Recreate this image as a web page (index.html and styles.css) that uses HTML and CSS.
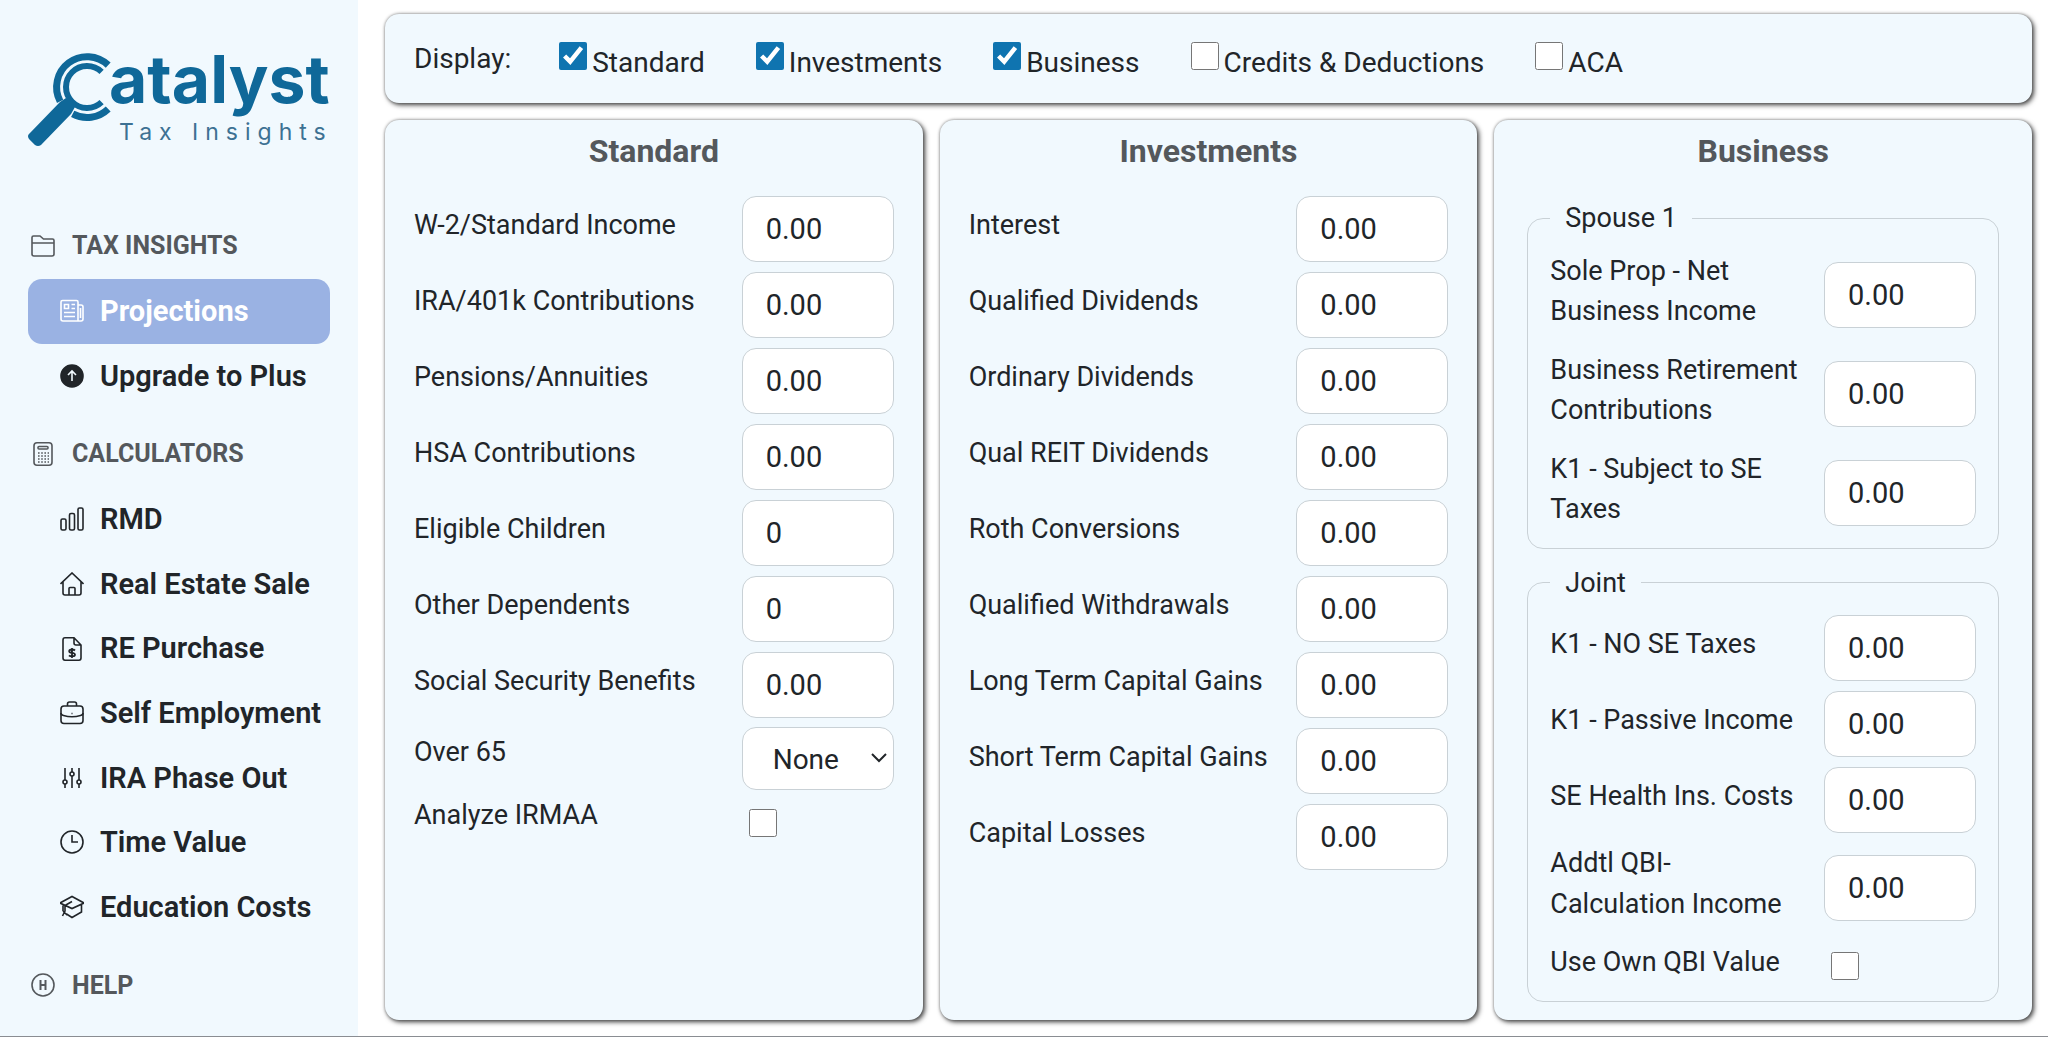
FILE: index.html
```html
<!DOCTYPE html>
<html lang="en">
<head>
  <meta charset="UTF-8">
  <meta name="viewport" content="width=device-width, initial-scale=1.0">
  <title>Catalyst Tax Insights - Projections</title>
  <link rel="stylesheet" href="styles.css">
</head>
<body>
  <aside class="sidebar">
    <a class="logo" href="#" aria-label="Catalyst Tax Insights">
      <svg viewBox="0 0 302 98" width="302" height="98">
        <g fill="none" stroke="#0f6899">
          <path stroke-width="7" d="M80.2 13.1A30.5 30.5 0 0 0 32.1 49.3"/>
          <path stroke-width="7" d="M44.7 61.9A30.5 30.5 0 0 0 80.2 56.9"/>
          <path stroke-width="6" d="M73.6 19.9A21 21 0 1 0 73.6 50.1"/>
        </g>
        <path fill="#0f6899" d="M38 46L47 55L43 62L13 93Q10 95 7 93L1 87Q-1 84 1 82L32 50Z"/>
        <text class="logo-name" x="81" y="51">atalyst</text>
        <text class="logo-tag" x="91" y="88">Tax Insights</text>
      </svg>
    </a>

    <nav class="menu">
      <h3 class="menu-title">
        <svg class="icon" viewBox="0 0 24 24"><path d="M1 5V3.500Q1 2 2.500 2H9L12.500 5H21.500Q23 5 23 6.500V20Q23 22 21 22H3Q1 22 1 20ZM1 9H23"/></svg>
        TAX INSIGHTS
      </h3>
      <a class="menu-item active" href="#">
        <svg class="icon" viewBox="0 0 24 24"><path d="M18 6H21Q23 6 23 8V20Q23 22 21 22H3Q1 22 1 20V3Q1 1.500 2.500 1.500H16.500Q18 1.500 18 3V22M20.500 9V19M4.500 5.500H8.500V9.500H4.500ZM11.500 5.500H15M11.500 9.500H15M4 13.500H15M4 17.500H15"/></svg>
        Projections
      </a>
      <a class="menu-item" href="#">
        <svg class="icon" viewBox="0 0 24 24"><circle cx="12" cy="12" r="11" fill="currentColor"/><path stroke="#f1f9fe" d="M12 17V7.500M8 11L12 7L16 11"/></svg>
        Upgrade to Plus
      </a>

      <h3 class="menu-title">
        <svg class="icon" viewBox="0 0 24 24"><rect x="3" y="0.800" width="18" height="22.400" rx="3"/><rect x="7" y="4.500" width="10" height="2.500" rx="1"/><path stroke-dasharray="1.600 1.600" d="M7 11H18M7 14H18M7 17H18M7 20H18"/></svg>
        CALCULATORS
      </h3>
      <a class="menu-item" href="#">
        <svg class="icon" viewBox="0 0 24 24"><rect x="1" y="12" width="5" height="11" rx="1.500"/><rect x="9.500" y="6.500" width="5" height="16.500" rx="1.500"/><rect x="18" y="1" width="5" height="22" rx="1.500"/></svg>
        RMD
      </a>
      <a class="menu-item" href="#">
        <svg class="icon" viewBox="0 0 24 24"><path d="M0.500 12L12 1L23.500 12M3 10V21Q3 23 5 23H19Q21 23 21 21V10M9 23V16.500Q9 15.500 10 15.500H14Q15 15.500 15 16.500V23"/></svg>
        Real Estate Sale
      </a>
      <a class="menu-item" href="#">
        <svg class="icon" viewBox="0 0 24 24"><path d="M14 0.800H5Q3 0.800 3 3V21Q3 23.200 5 23.200H19Q21 23.200 21 21V8ZM14 0.800V6Q14 8 16 8H21"/><path stroke-width="1.800" d="M15 13.500Q14 12.500 12 12.500Q9.200 12.500 9.200 14.200Q9.200 15.600 12 15.900Q15 16.200 15 17.800Q15 19.400 12 19.400Q10 19.400 9 18.300M12 11V21"/></svg>
        RE Purchase
      </a>
      <a class="menu-item" href="#">
        <svg class="icon" viewBox="0 0 24 24"><rect x="1" y="5" width="22" height="17.500" rx="3"/><path d="M7.500 5V3Q7.500 1 9.500 1H14.500Q16.500 1 16.500 3V5M1 12Q1 14 3.500 14.500Q12 17 20.500 14.500Q23 14 23 12M11.500 12.500H12.500"/></svg>
        Self Employment
      </a>
      <a class="menu-item" href="#">
        <svg class="icon" viewBox="0 0 24 24"><path d="M5 2V14M5 18V22M12 2V6M12 10V22M19 2V14M19 18V22"/><circle cx="5" cy="16" r="2"/><circle cx="12" cy="8" r="2"/><circle cx="19" cy="16" r="2"/></svg>
        IRA Phase Out
      </a>
      <a class="menu-item" href="#">
        <svg class="icon" viewBox="0 0 24 24"><circle cx="12" cy="12" r="11"/><path d="M12 5V12H18"/></svg>
        Time Value
      </a>
      <a class="menu-item" href="#">
        <svg class="icon" viewBox="0 0 24 24"><path d="M0 8L12 1.500L24 8L12 13.500ZM21.500 9.500V17L12 22.500L6.500 19M12 6.500L5 10.500V16.500M3 9.500V16M3 16L7 20M5 16L2.500 21"/></svg>
        Education Costs
      </a>

      <h3 class="menu-title">
        <svg class="icon" viewBox="0 0 24 24"><circle cx="12" cy="12" r="11"/><path stroke-width="2" d="M9.500 7V17M14.500 7V17M9.500 12H14.500"/></svg>
        HELP
      </h3>
    </nav>
  </aside>

  <main class="content">
    <section class="panel display-bar">
      <span class="display-title">Display:</span>
      <label class="toggle"><input type="checkbox" checked><span>Standard</span></label>
      <label class="toggle"><input type="checkbox" checked><span>Investments</span></label>
      <label class="toggle"><input type="checkbox" checked><span>Business</span></label>
      <label class="toggle"><input type="checkbox"><span>Credits &amp; Deductions</span></label>
      <label class="toggle"><input type="checkbox"><span>ACA</span></label>
    </section>

    <div class="columns">
      <section class="panel column">
        <h2>Standard</h2>
        <div class="row"><label for="w2">W-2/Standard Income</label><input id="w2" type="text" value="0.00"></div>
        <div class="row"><label for="ira">IRA/401k Contributions</label><input id="ira" type="text" value="0.00"></div>
        <div class="row"><label for="pensions">Pensions/Annuities</label><input id="pensions" type="text" value="0.00"></div>
        <div class="row"><label for="hsa">HSA Contributions</label><input id="hsa" type="text" value="0.00"></div>
        <div class="row"><label for="children">Eligible Children</label><input id="children" type="text" value="0"></div>
        <div class="row"><label for="dependents">Other Dependents</label><input id="dependents" type="text" value="0"></div>
        <div class="row"><label for="ssb">Social Security Benefits</label><input id="ssb" type="text" value="0.00"></div>
        <div class="row row-select">
          <label for="over65">Over 65</label>
          <div class="select-box">
            <select id="over65">
              <option>None</option>
              <option>One</option>
              <option>Both</option>
            </select>
            <svg class="chevron" viewBox="0 0 16 10"><path d="M1 1L8 8L15 1"/></svg>
          </div>
        </div>
        <div class="row row-check"><label for="irmaa">Analyze IRMAA</label><div class="check-box"><input id="irmaa" type="checkbox"></div></div>
      </section>

      <section class="panel column">
        <h2>Investments</h2>
        <div class="row"><label for="interest">Interest</label><input id="interest" type="text" value="0.00"></div>
        <div class="row"><label for="qualdiv">Qualified Dividends</label><input id="qualdiv" type="text" value="0.00"></div>
        <div class="row"><label for="orddiv">Ordinary Dividends</label><input id="orddiv" type="text" value="0.00"></div>
        <div class="row"><label for="reit">Qual REIT Dividends</label><input id="reit" type="text" value="0.00"></div>
        <div class="row"><label for="roth">Roth Conversions</label><input id="roth" type="text" value="0.00"></div>
        <div class="row"><label for="withdrawals">Qualified Withdrawals</label><input id="withdrawals" type="text" value="0.00"></div>
        <div class="row"><label for="ltcg">Long Term Capital Gains</label><input id="ltcg" type="text" value="0.00"></div>
        <div class="row"><label for="stcg">Short Term Capital Gains</label><input id="stcg" type="text" value="0.00"></div>
        <div class="row"><label for="losses">Capital Losses</label><input id="losses" type="text" value="0.00"></div>
      </section>

      <section class="panel column">
        <h2>Business</h2>
        <div class="groups">
          <fieldset>
            <legend>Spouse 1</legend>
            <div class="row"><label for="soleprop">Sole Prop - Net Business Income</label><input id="soleprop" type="text" value="0.00"></div>
            <div class="row"><label for="retirement">Business Retirement Contributions</label><input id="retirement" type="text" value="0.00"></div>
            <div class="row"><label for="k1se">K1 - Subject to SE Taxes</label><input id="k1se" type="text" value="0.00"></div>
          </fieldset>
          <fieldset>
            <legend>Joint</legend>
            <div class="row"><label for="k1nose">K1 - NO SE Taxes</label><input id="k1nose" type="text" value="0.00"></div>
            <div class="row"><label for="k1passive">K1 - Passive Income</label><input id="k1passive" type="text" value="0.00"></div>
            <div class="row"><label for="sehealth">SE Health Ins. Costs</label><input id="sehealth" type="text" value="0.00"></div>
            <div class="row"><label for="qbi">Addtl QBI-Calculation Income</label><input id="qbi" type="text" value="0.00"></div>
            <div class="row row-check"><label for="ownqbi">Use Own QBI Value</label><div class="check-box"><input id="ownqbi" type="checkbox"></div></div>
          </fieldset>
        </div>
      </section>
    </div>
  </main>
</body>
</html>
```
FILE: styles.css
```css
:root {
  --panel-bg: #f1f9fe;
  --text: #212529;
  --muted: #54585c;
  --border: #c9d1d6;
  --accent: #0f74b0;
}

* {
  box-sizing: border-box;
}

body {
  margin: 0;
  display: flex;
  min-height: 100vh;
  background: #fff;
  border-bottom: 1px solid #8a8d92;
  color: var(--text);
  font-family: Roboto, "Noto Sans", sans-serif;
  font-size: 27px;
  line-height: 1.5;
}

/* Sidebar */
.sidebar {
  flex: 0 0 357px;
  padding: 52px 28px 0;
  background: var(--panel-bg);
}

.logo {
  display: block;
  height: 98px;
}

.logo svg {
  display: block;
  overflow: visible;
}

.logo-name {
  font-family: Inter, sans-serif;
  font-size: 66px;
  font-weight: 700;
  fill: #0f6899;
}

.logo-tag {
  font-family: Inter, sans-serif;
  font-size: 23px;
  font-weight: 400;
  letter-spacing: 7px;
  fill: #3d7193;
}

.menu {
  margin-top: 63px;
}

.menu-title {
  display: flex;
  align-items: center;
  gap: 17px;
  margin: 0;
  padding: 0 3px;
  height: 66px;
  color: var(--muted);
  font-size: 25px;
  font-weight: 700;
}

.menu-item + .menu-title {
  margin-top: 13px;
}

.menu-item {
  display: flex;
  align-items: center;
  gap: 16px;
  padding: 12px 0 12px 32px;
  border-radius: 14px;
  color: var(--text);
  font-size: 29px;
  font-weight: 600;
  line-height: 1.4;
  text-decoration: none;
  white-space: nowrap;
}

.menu-item.active {
  background: #9ab2e3;
  color: #fff;
  font-weight: 700;
}

.icon {
  flex: none;
  width: 24px;
  height: 24px;
  fill: none;
  stroke: currentColor;
  stroke-width: 1.6;
}

/* Main area */
.content {
  flex: 1;
  display: flex;
  flex-direction: column;
  gap: 17px;
  padding: 14px 16px 16px 27px;
}

.panel {
  background: var(--panel-bg);
  border-radius: 14px;
  box-shadow: 2px 2px 5px #444, 0 0 3px #999;
}

.display-bar {
  display: flex;
  align-items: center;
  gap: 51px;
  padding: 24px 29px;
  font-size: 28px;
  line-height: 41px;
}

.display-title {
  margin-right: -3px;
}

.toggle {
  display: flex;
  gap: 5px;
}

.toggle span {
  padding-top: 4px;
  margin-bottom: -4px;
}

input[type="checkbox"] {
  width: 28px;
  height: 28px;
  margin: 4px 0 0;
  accent-color: var(--accent);
}

.columns {
  flex: 1;
  display: grid;
  grid-template-columns: repeat(3, 1fr);
  gap: 17px;
}

.column {
  padding: 9px 29px 17px;
}

h2 {
  margin: 0 0 13px;
  color: var(--muted);
  font-size: 32px;
  font-weight: 700;
  line-height: 45px;
  text-align: center;
}

.row {
  display: flex;
  align-items: center;
  justify-content: space-between;
  gap: 20px;
}

.row label {
  flex: 1;
  padding: 9px 0;
}

.row input[type="text"],
.row select {
  width: 152px;
  height: 66px;
  margin: 9px 0 1px;
  padding: 0 23px;
  border: 1px solid var(--border);
  border-radius: 14px;
  background: #fff;
  color: var(--text);
  font: inherit;
  font-size: 29px;
}

.row-select,
.row-check {
  align-items: flex-start;
}

.row-select label {
  padding: 13px 0 0;
}

.select-box {
  position: relative;
}

.row select {
  display: block;
  height: 63px;
  margin: 8px 0 0;
  padding: 2px 30px 0;
  font-size: 28px;
  appearance: none;
}

.chevron {
  position: absolute;
  right: 7px;
  top: 34px;
  width: 16px;
  height: 10px;
  fill: none;
  stroke: var(--text);
  stroke-width: 2;
  pointer-events: none;
}

.row-check label {
  padding: 5px 0 13px;
}

.check-box {
  width: 152px;
  padding-left: 7px;
}

.check-box input[type="checkbox"] {
  display: block;
  margin-top: 19px;
}

.groups {
  margin: 24px 4px 0;
}

fieldset {
  margin: 0 0 14px;
  padding: 3px 22px 9px;
  border: 1px solid var(--border);
  border-radius: 16px;
}

fieldset:last-child {
  margin-bottom: 0;
}

legend {
  padding: 0 15px;
}

fieldset .row-check label {
  padding-top: 9px;
  padding-bottom: 9px;
}
```
